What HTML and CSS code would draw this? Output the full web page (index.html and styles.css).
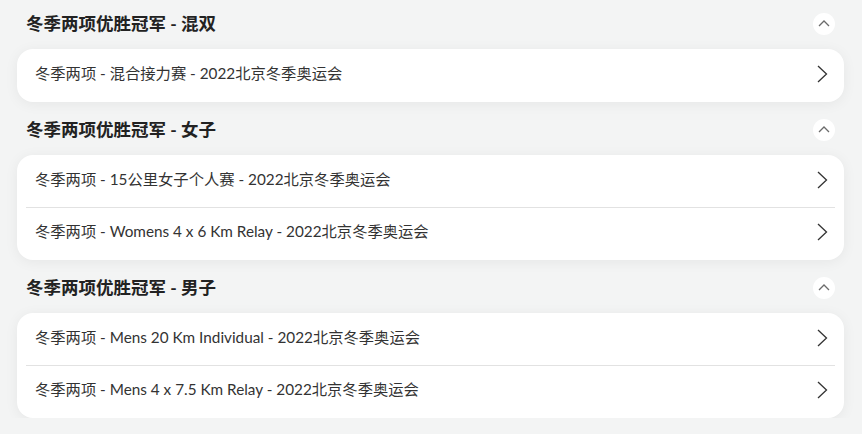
FILE: index.html
```html
<!DOCTYPE html>
<html lang="zh-CN">
<head>
<meta charset="utf-8">
<title>冬季两项优胜冠军</title>
<link rel="stylesheet" href="styles.css">
</head>
<body>
<main class="page">
  <section class="group">
    <header class="group-head">
      <h2 class="group-title">冬季两项优胜冠军 - 混双</h2>
      <button class="toggle" aria-label="收起">
        <svg viewBox="0 0 12 7" width="12" height="7"><path d="M1 6 L6 1 L11 6" fill="none" stroke="#6b6b6b" stroke-width="1.3"/></svg>
      </button>
    </header>
    <div class="card">
      <a class="row"><span class="row-text">冬季两项 - 混合接力赛 - 2022北京冬季奥运会</span><svg class="chev" viewBox="0 0 11 18" width="11" height="18"><path d="M1 1 L9.5 9 L1 17" fill="none" stroke="#333" stroke-width="1.3"/></svg></a>
    </div>
  </section>
  <section class="group">
    <header class="group-head">
      <h2 class="group-title">冬季两项优胜冠军 - 女子</h2>
      <button class="toggle" aria-label="收起">
        <svg viewBox="0 0 12 7" width="12" height="7"><path d="M1 6 L6 1 L11 6" fill="none" stroke="#6b6b6b" stroke-width="1.3"/></svg>
      </button>
    </header>
    <div class="card">
      <a class="row"><span class="row-text">冬季两项 - 15公里女子个人赛 - 2022北京冬季奥运会</span><svg class="chev" viewBox="0 0 11 18" width="11" height="18"><path d="M1 1 L9.5 9 L1 17" fill="none" stroke="#333" stroke-width="1.3"/></svg></a>
      <a class="row"><span class="row-text">冬季两项 - Womens 4 x 6 Km Relay - 2022北京冬季奥运会</span><svg class="chev" viewBox="0 0 11 18" width="11" height="18"><path d="M1 1 L9.5 9 L1 17" fill="none" stroke="#333" stroke-width="1.3"/></svg></a>
    </div>
  </section>
  <section class="group">
    <header class="group-head">
      <h2 class="group-title">冬季两项优胜冠军 - 男子</h2>
      <button class="toggle" aria-label="收起">
        <svg viewBox="0 0 12 7" width="12" height="7"><path d="M1 6 L6 1 L11 6" fill="none" stroke="#6b6b6b" stroke-width="1.3"/></svg>
      </button>
    </header>
    <div class="card">
      <a class="row"><span class="row-text">冬季两项 - Mens 20 Km Individual - 2022北京冬季奥运会</span><svg class="chev" viewBox="0 0 11 18" width="11" height="18"><path d="M1 1 L9.5 9 L1 17" fill="none" stroke="#333" stroke-width="1.3"/></svg></a>
      <a class="row"><span class="row-text">冬季两项 - Mens 4 x 7.5 Km Relay - 2022北京冬季奥运会</span><svg class="chev" viewBox="0 0 11 18" width="11" height="18"><path d="M1 1 L9.5 9 L1 17" fill="none" stroke="#333" stroke-width="1.3"/></svg></a>
    </div>
  </section>
</main>
</body>
</html>
```

FILE: styles.css
```css
* { box-sizing: border-box; }
html, body {
  margin: 0;
  padding: 0;
  background: #f3f4f4;
}
body {
  font-family: Lato, "Noto Sans CJK SC", sans-serif;
  color: #333;
}
.page {
  padding: 0 18px 0 17px;
  display: flex;
  flex-direction: column;
  gap: 4px;
}
.group-head {
  height: 49px;
  display: flex;
  align-items: center;
  justify-content: space-between;
  padding: 0 9px 2px;
}
.group-title {
  margin: 0;
  font-size: 17.5px;
  font-weight: 700;
  color: #222;
  line-height: 1;
}
.toggle {
  width: 22px;
  height: 22px;
  border: 0;
  padding: 0;
  border-radius: 50%;
  background: #fff;
  display: flex;
  align-items: center;
  justify-content: center;
  cursor: pointer;
}
.card {
  background: #fff;
  border-radius: 16px;
  box-shadow: 0 2px 14px rgba(0, 0, 0, 0.06);
  padding-bottom: 1px;
}
.row {
  height: 52px;
  margin: 0 9px;
  padding: 0 7px 3px 9px;
  display: flex;
  align-items: center;
  justify-content: space-between;
  color: #333;
  text-decoration: none;
}
.row + .row {
  border-top: 1px solid #e2e2e2;
  height: 52px;
}
.row-text {
  font-size: 15.3px;
  line-height: 1;
}
.chev { display: block; }
```
